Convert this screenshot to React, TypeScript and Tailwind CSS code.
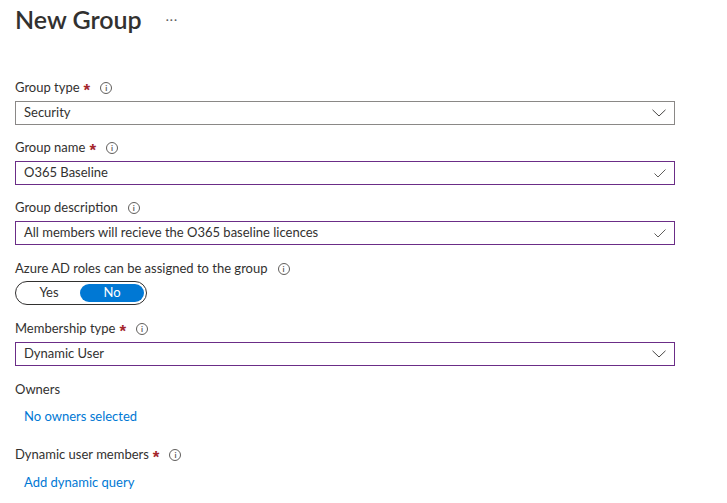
const font = { fontFamily: '"Segoe UI", Lato, "Noto Sans", sans-serif' };

function Info() {
  return (
    <span className="ml-[10px] inline-flex h-[12px] w-[12px] items-center justify-center rounded-full border border-[#605e5c] text-[8px] font-bold leading-none text-[#605e5c]">
      i
    </span>
  );
}

function Label({ text, req, info = true }: { text: string; req?: boolean; info?: boolean }) {
  return (
    <div className="flex h-[18px] items-center text-[13px] text-[#323130]">
      <span>{text}</span>
      {req && (
        <span className="ml-[4px] mt-[4px] font-['Liberation_Sans',sans-serif] text-[17px] font-bold leading-none text-[#a4262c]">
          *
        </span>
      )}
      {info && <Info />}
    </div>
  );
}

function Chevron() {
  return (
    <svg width="14" height="8" viewBox="0 0 14 8" fill="none" stroke="#484644" strokeWidth="1">
      <polyline points="0.5,0.8 7,7 13.5,0.8" />
    </svg>
  );
}

function Tick() {
  return (
    <svg width="12" height="9" viewBox="0 0 12 9" fill="none" stroke="#605e5c" strokeWidth="1">
      <polyline points="0.5,4.5 4,8 11.5,0.5" />
    </svg>
  );
}

function Field({ value, purple, kind }: { value: string; purple?: boolean; kind: "select" | "check" }) {
  return (
    <div
      className={`mt-[4px] flex h-[24px] items-center justify-between border pl-[8px] pr-[8px] text-[13px] text-[#323130] ${
        purple ? "border-[#6b2d87]" : "border-[#8a8886]"
      }`}
    >
      <span>{value}</span>
      {kind === "select" ? <Chevron /> : <Tick />}
    </div>
  );
}

export default function App() {
  return (
    <div className="min-h-[503px] w-[727px] bg-white pl-[15px] pr-[52px]" style={font}>
      <div className="flex h-[40px] items-center">
        <h1 className="text-[25px] font-semibold text-[#323130]">New Group</h1>
        <span className="ml-[24px] text-[12px] tracking-[1px] text-[#605e5c]">···</span>
      </div>

      <div className="pt-[39px]">
        <Label text="Group type" req />
        <Field value="Security" kind="select" />
      </div>

      <div className="pt-[14px]">
        <Label text="Group name" req />
        <Field value="O365 Baseline" kind="check" purple />
      </div>

      <div className="pt-[14px]">
        <Label text="Group description" />
        <Field value="All members will recieve the O365 baseline licences" kind="check" purple />
      </div>

      <div className="pt-[15px]">
        <Label text="Azure AD roles can be assigned to the group" />
        <div className="mt-[3px] flex h-[24px] w-[132px] items-center rounded-full border border-[#323130] p-[2px] text-[13px]">
          <span className="flex-1 text-center text-[#323130]">Yes</span>
          <span className="flex h-full w-[64px] items-center justify-center rounded-full bg-[#0078d4] text-white">
            No
          </span>
        </div>
      </div>

      <div className="pt-[15px]">
        <Label text="Membership type" req />
        <Field value="Dynamic User" kind="select" purple />
      </div>

      <div className="pt-[15px]">
        <Label text="Owners" info={false} />
        <div className="mt-[8px] pl-[9px] text-[13px] leading-[18px] text-[#0078d4]">No owners selected</div>
      </div>

      <div className="pt-[21px]">
        <Label text="Dynamic user members" req />
        <div className="mt-[9px] pl-[9px] text-[13px] leading-[18px] text-[#0078d4]">Add dynamic query</div>
      </div>
    </div>
  );
}
